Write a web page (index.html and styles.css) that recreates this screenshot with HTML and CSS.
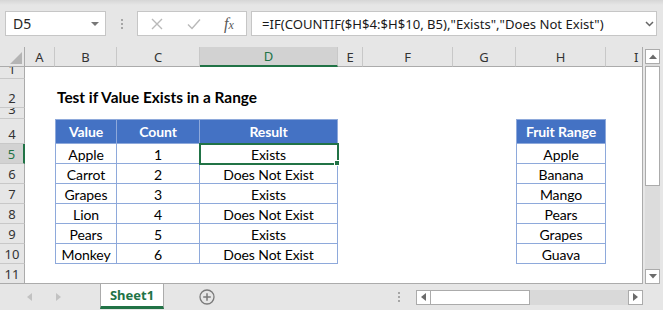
FILE: index.html
```html
<!DOCTYPE html>
<html>
<head>
<meta charset="utf-8">
<link rel="stylesheet" href="styles.css">
</head>
<body>
<div class="app">
  <div class="topbar">
    <div class="namebox"><span>D5</span><span class="tri-down"></span></div>
    <div class="dots"><i></i><i></i><i></i></div>
    <div class="fxbox">
      <span class="fxbtn b1"><svg width="12" height="12" viewBox="0 0 12 12"><path d="M1 1L11 11M11 1L1 11" stroke="#b9b9b9" stroke-width="1.4" fill="none"/></svg></span>
      <span class="fxbtn b2"><svg width="14" height="12" viewBox="0 0 14 12"><path d="M1 6.5L5 10.5L13 1.5" stroke="#b9b9b9" stroke-width="1.4" fill="none"/></svg></span>
      <span class="fxbtn b3"><span class="fx">f<span class="fxx">x</span></span></span>
    </div>
    <div class="formula"><span class="ftext">=IF(COUNTIF($H$4:$H$10, B5),"Exists","Does Not Exist")</span><svg class="chev" width="9" height="6" viewBox="0 0 9 6"><path d="M1 1L4.5 4.5L8 1" stroke="#666" stroke-width="1.5" fill="none"/></svg></div>
  </div>

  <div class="main">
    <div class="sheet">
      <div class="grid">
        <div class="corner"><span class="corner-tri"></span></div>
        <div class="ch">A</div><div class="ch">B</div><div class="ch">C</div><div class="ch ch-sel">D</div><div class="ch">E</div><div class="ch">F</div><div class="ch">G</div><div class="ch">H</div><div class="ch ch-i">I</div>
        <div class="rh">1</div><div></div><div></div><div></div><div></div><div></div><div></div><div></div><div></div><div></div>
        <div class="rh">2</div><div></div><div class="title">Test if Value Exists in a Range</div><div></div><div></div><div></div><div></div><div></div><div></div><div></div>
        <div class="rh">3</div><div></div><div></div><div></div><div></div><div></div><div></div><div></div><div></div><div></div>
        <div class="rh">4</div><div></div><div class="t th tl">Value</div><div class="t th">Count</div><div class="t th">Result</div><div></div><div></div><div></div><div class="t th tl">Fruit Range</div><div></div>
        <div class="rh rh-sel">5</div><div></div><div class="t tl">Apple</div><div class="t">1</div><div class="t sel">Exists<span class="handle"></span></div><div></div><div></div><div></div><div class="t tl">Apple</div><div></div>
        <div class="rh">6</div><div></div><div class="t tl">Carrot</div><div class="t">2</div><div class="t">Does Not Exist</div><div></div><div></div><div></div><div class="t tl">Banana</div><div></div>
        <div class="rh">7</div><div></div><div class="t tl">Grapes</div><div class="t">3</div><div class="t">Exists</div><div></div><div></div><div></div><div class="t tl">Mango</div><div></div>
        <div class="rh">8</div><div></div><div class="t tl">Lion</div><div class="t">4</div><div class="t">Does Not Exist</div><div></div><div></div><div></div><div class="t tl">Pears</div><div></div>
        <div class="rh">9</div><div></div><div class="t tl">Pears</div><div class="t">5</div><div class="t">Exists</div><div></div><div></div><div></div><div class="t tl">Grapes</div><div></div>
        <div class="rh">10</div><div></div><div class="t tl">Monkey</div><div class="t">6</div><div class="t">Does Not Exist</div><div></div><div></div><div></div><div class="t tl">Guava</div><div></div>
        <div class="rh">11</div><div></div><div></div><div></div><div></div><div></div><div></div><div></div><div></div><div></div>
      </div>
    </div>
    <div class="vscroll">
      <div class="sbtn"><svg width="8" height="5" viewBox="0 0 8 5"><path d="M0 5L4 0.5L8 5Z" fill="#6b6b6b"/></svg></div>
      <div class="vtrack"><div class="vthumb"></div></div>
      <div class="sbtn"><svg width="8" height="5" viewBox="0 0 8 5"><path d="M0 0L4 4.5L8 0Z" fill="#6b6b6b"/></svg></div>
    </div>
  </div>

  <div class="tabbar">
    <div class="nav">
      <svg width="5" height="8" viewBox="0 0 5 8"><path d="M5 0L0 4L5 8Z" fill="#c2c2c2"/></svg>
      <svg width="5" height="8" viewBox="0 0 5 8"><path d="M0 0L5 4L0 8Z" fill="#c2c2c2"/></svg>
    </div>
    <div class="tab">Sheet1</div>
    <div class="addsheet"><svg width="16" height="16" viewBox="0 0 16 16"><circle cx="8" cy="8" r="7" stroke="#7a7a7a" stroke-width="1.3" fill="none"/><path d="M8 4.2V11.8M4.2 8H11.8" stroke="#7a7a7a" stroke-width="1.5"/></svg></div>
    <div class="hdots"><i></i><i></i><i></i></div>
    <div class="hscroll">
      <div class="hbtn"><svg width="5" height="8" viewBox="0 0 5 8"><path d="M5 0L0 4L5 8Z" fill="#6b6b6b"/></svg></div>
      <div class="hthumb"></div>
      <div class="htrack"></div>
      <div class="hbtn"><svg width="5" height="8" viewBox="0 0 5 8"><path d="M0 0L5 4L0 8Z" fill="#6b6b6b"/></svg></div>
    </div>
  </div>
</div>
</body>
</html>
```

FILE: styles.css
```css
* { box-sizing: border-box; }
html, body { margin: 0; padding: 0; }
body {
  width: 663px;
  height: 310px;
  overflow: hidden;
  background: #e6e6e6;
  font-family: "Noto Sans", sans-serif;
}
.app { width: 663px; height: 310px; display: flex; flex-direction: column; }

/* top bar */
.topbar {
  width: 663px;
  height: 47px;
  flex-shrink: 0;
  display: flex;
  align-items: flex-start;
  padding: 11px 0 0 5px;
  background: linear-gradient(#d6d6d6 0, #e6e6e6 5px);
}
.topbar > * { flex-shrink: 0; }
.namebox {
  width: 101px; height: 25px;
  background: #fff; border: 1px solid #c6c6c6;
  display: flex; align-items: center; justify-content: space-between;
  padding: 0 6px 0 7px;
  font-size: 14px; color: #262626;
}
.tri-down { width: 0; height: 0; border-left: 4px solid transparent; border-right: 4px solid transparent; border-top: 4px solid #777; }
.dots { width: 31px; height: 25px; display: flex; flex-direction: column; align-items: center; justify-content: center; gap: 2px; }
.dots i, .hdots i { display: block; width: 2px; height: 2px; background: #a6a6a6; }
.fxbox {
  width: 110px; height: 25px;
  background: #fff; border: 1px solid #c6c6c6;
  display: flex; align-items: center;
}
.fxbtn { display: flex; align-items: center; justify-content: center; height: 100%; }
.b1 { width: 37px; }
.b2 { width: 37px; }
.b3 { width: 34px; }
.fx { font-family: "Liberation Serif", serif; font-style: italic; font-size: 16px; color: #595959; }
.fxx { font-size: 12px; }
.formula {
  margin-left: 4px;
  width: 406px; height: 25px;
  background: #fff; border: 1px solid #c6c6c6;
  display: flex; align-items: center;
  padding: 0 2px 0 10px;
  font-size: 13.1px; color: #1a1a1a;
  white-space: nowrap;
}
.ftext { flex: 1; }
.chev { flex-shrink: 0; }

/* sheet */
.main { height: 237px; flex-shrink: 0; display: flex; }
.sheet { width: 643px; flex-shrink: 0; overflow: hidden; background: #fff; border-right: 1px solid #ababab; border-bottom: 1px solid #ababab; }
.grid {
  display: grid;
  grid-template-columns: 25px 30px 62px 83px 138px 25px 90px 63px 90px 62px;
  grid-template-rows: 20px 12px 29px 11px 25px repeat(6, 20px) 20px;
  width: 668px;
  font-family: Lato, "Liberation Sans", sans-serif;
  font-size: 14px;
  letter-spacing: -0.1px;
  color: #000;
}
.corner { background: #e6e6e6; border-right: 1px solid #ababab; border-bottom: 1px solid #ababab; position: relative; }
.corner-tri { position: absolute; right: 2px; bottom: 2px; width: 0; height: 0; border-left: 12px solid transparent; border-bottom: 12px solid #b4b4b4; }
.ch {
  background: #e6e6e6;
  border-right: 1px solid #c8c8c8;
  border-bottom: 1px solid #ababab;
  display: flex; align-items: center; justify-content: center;
  font-family: "Noto Sans", sans-serif; font-size: 13px; color: #333; letter-spacing: 0;
}
.ch-sel { background: #d2d2d2; color: #217346; border-bottom: 2px solid #217346; }
.ch-i { justify-content: flex-start; padding-left: 28px; }
.rh {
  background: #e6e6e6;
  border-right: 1px solid #ababab;
  border-bottom: 1px solid #c8c8c8;
  display: flex; align-items: flex-end; justify-content: center;
  font-family: "Noto Sans", sans-serif; font-size: 13px; color: #333; letter-spacing: 0;
  line-height: 18px;
  overflow: hidden;
}
.rh-sel { background: #d2d2d2; color: #217346; border-right: 2px solid #217346; }
.title { font-weight: bold; font-size: 15.4px; letter-spacing: 0; white-space: nowrap; padding-left: 2px; display: flex; align-items: flex-end; padding-bottom: 2px; }

.t {
  border-right: 1px solid #8ea9db;
  border-bottom: 1px solid #8ea9db;
  display: flex; align-items: center; justify-content: center;
  white-space: nowrap;
  padding-top: 1px;
}
.tl { border-left: 1px solid #8ea9db; }
.th { background: #4472c4; color: #fff; font-weight: bold; border-top: 1px solid #8ea9db; align-items: flex-end; padding-bottom: 3px; }
.sel { position: relative; outline: 2px solid #217346; outline-offset: -1px; z-index: 2; }
.handle { position: absolute; right: -3px; bottom: -3px; width: 6px; height: 6px; background: #217346; border: 1px solid #fff; }

/* vertical scrollbar */
.vscroll { width: 20px; flex-shrink: 0; display: flex; flex-direction: column; padding: 2px 3px 0 2px; }
.sbtn { width: 15px; height: 15px; flex-shrink: 0; background: #fff; border: 1px solid #ababab; display: flex; align-items: center; justify-content: center; }
.vtrack { flex: 1; background: #dcdcdc; width: 15px; padding-top: 2px; }
.vthumb { height: 120px; background: #fff; border: 1px solid #ababab; }

/* tab bar */
.tabbar { height: 26px; flex-shrink: 0; display: flex; align-items: stretch; background: #e6e6e6; }
.tabbar > * { flex-shrink: 0; }
.nav { width: 100px; display: flex; align-items: center; gap: 24px; padding-left: 27px; }
.tab {
  width: 64px; background: #fff;
  border-left: 1px solid #ababab; border-right: 1px solid #ababab;
  border-bottom: 3px solid #217346;
  display: flex; align-items: center; justify-content: center;
  font-family: "Noto Sans", sans-serif; font-weight: bold; font-size: 13px; color: #217346;
  margin-bottom: 1px;
}
.addsheet { width: 86px; display: flex; align-items: center; padding-left: 35px; }
.hdots { width: 150px; display: flex; flex-direction: column; align-items: flex-end; justify-content: center; gap: 2px; }
.hscroll { display: flex; align-items: center; margin-left: 16px; }
.hscroll > * { flex-shrink: 0; }
.hbtn { width: 15px; height: 15px; background: #fff; border: 1px solid #ababab; display: flex; align-items: center; justify-content: center; }
.hthumb { width: 99px; height: 15px; background: #fff; border: 1px solid #ababab; border-left: none; }
.htrack { width: 98px; height: 15px; background: #d9d9d9; }
```
